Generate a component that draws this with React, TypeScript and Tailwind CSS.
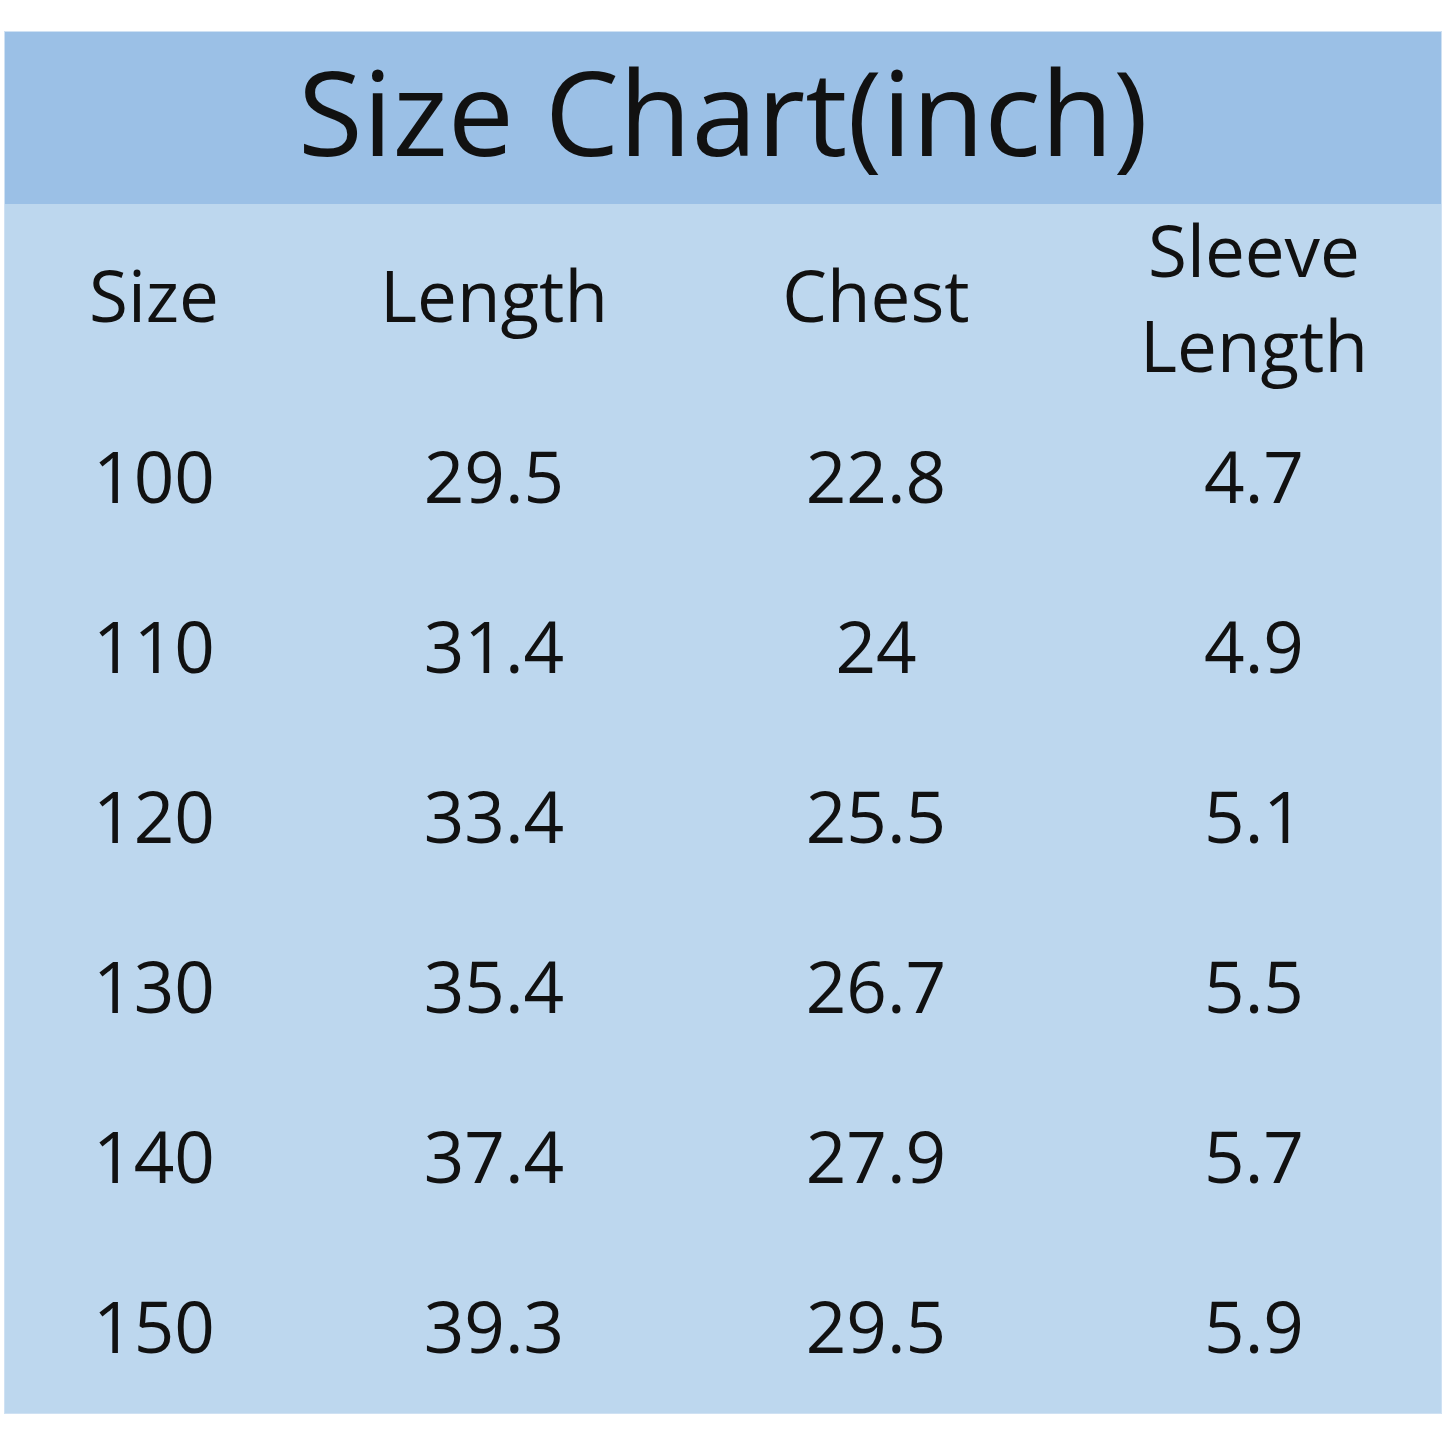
const headers = ["Size", "Length", "Chest"];

const rows = [
  ["100", "29.5", "22.8", "4.7"],
  ["110", "31.4", "24", "4.9"],
  ["120", "33.4", "25.5", "5.1"],
  ["130", "35.4", "26.7", "5.5"],
  ["140", "37.4", "27.9", "5.7"],
  ["150", "39.3", "29.5", "5.9"],
];

export default function App() {
  return (
    <div className="w-[1445px] h-[1445px] bg-white pt-[31px] pl-[4px] font-['Open_Sans',sans-serif] text-[#111]">
      <div className="w-[1438px] border border-[#cfe1f3] bg-[#bdd7ee]">
        <div className="h-[172px] bg-[#9bc0e6] flex items-center justify-center">
          <span className="text-[118px] leading-none pb-[14px]">Size Chart(inch)</span>
        </div>
        <div className="grid grid-cols-[298px_382px_382px_1fr] text-[71px] leading-none">
          {headers.map((h) => (
            <div key={h} className="h-[189px] flex items-center justify-center pb-[8px]">
              {h}
            </div>
          ))}
          <div className="h-[189px] flex flex-col items-center justify-center leading-[95px] text-center pb-[4px]">
            <span>Sleeve</span>
            <span>Length</span>
          </div>
          {rows.map((r) =>
            r.map((v, i) => (
              <div key={r[0] + i} className="h-[170px] flex items-center justify-center pb-[6px]">
                {v}
              </div>
            ))
          )}
        </div>
      </div>
    </div>
  );
}
